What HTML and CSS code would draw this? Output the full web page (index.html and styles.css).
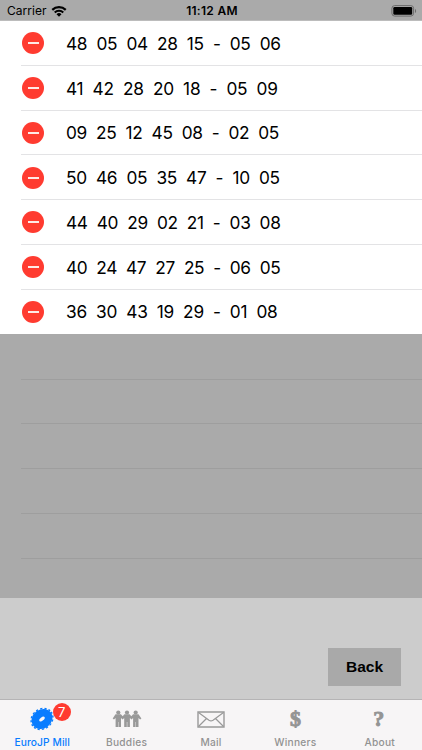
FILE: index.html
```html
<!DOCTYPE html>
<html lang="en">
<head>
<meta charset="utf-8">
<title>EuroJP Mill</title>
<link rel="stylesheet" href="styles.css">
</head>
<body>
<div class="app">
  <header class="status">
    <div class="carrier"><span>Carrier</span>
      <svg width="16" height="12" viewBox="0 0 16 12"><path d="M.5 4.1a10.8 10.8 0 0 1 15 0l-1.500 1.600a8.600 8.600 0 0 0-12 0zM3 6.700a7.200 7.200 0 0 1 10 0l-1.500 1.500a5 5 0 0 0-7 0zM5.500 9.200a3.600 3.600 0 0 1 5 0L8 11.700z"/></svg>
    </div>
    <div class="time">11:12 AM</div>
    <svg class="battery" width="26" height="12" viewBox="0 0 26 12"><rect x=".9" y=".6" width="21.7" height="10.5" rx="2.8" fill="none" stroke="#6b6b6b"/><rect x="2.3" y="2" width="18.9" height="7.7" rx="1.3"/><path d="M24 4v4c1.5-.6 1.5-3.4 0-4" fill="#6b6b6b"/></svg>
  </header>
  <main class="list">
    <div class="row"><i class="minus"></i><span>48  05  04  28  15  -  05  06</span></div>
    <div class="row"><i class="minus"></i><span>41  42  28  20  18  -  05  09</span></div>
    <div class="row"><i class="minus"></i><span>09  25  12  45  08  -  02  05</span></div>
    <div class="row"><i class="minus"></i><span>50  46  05  35  47  -  10  05</span></div>
    <div class="row"><i class="minus"></i><span>44  40  29  02  21  -  03  08</span></div>
    <div class="row"><i class="minus"></i><span>40  24  47  27  25  -  06  05</span></div>
    <div class="row last"><i class="minus"></i><span>36  30  43  19  29  -  01  08</span></div>
    <div class="empty"></div><div class="empty"></div><div class="empty"></div><div class="empty"></div><div class="empty"></div>
  </main>
  <section class="toolbar"><button class="back">Back</button></section>
  <nav class="tabs">
    <a class="tab active"><div class="icon">
      <svg width="28" height="26" viewBox="-14 -13 28 26"><g transform="rotate(-38) scale(1 .86)"><circle r="11" fill="currentColor"/><circle r="11.500" fill="none" stroke="currentColor" stroke-width="1.500" stroke-dasharray="2.300 2.216"/><ellipse rx="3.200" ry="2" fill="#f7f5f6"/></g></svg>
      <b class="badge">7</b></div><span>EuroJP Mill</span></a>
    <a class="tab"><div class="icon">
      <svg width="30" height="18" viewBox="0 0 30 18"><g fill="currentColor"><circle cx="6.3" cy="2.5" r="2.1"/><circle cx="15" cy="2.5" r="2.1"/><circle cx="23.7" cy="2.5" r="2.1"/><path d="M3.500 4.300h5.400l1.800 1.900 1.700-1.900h5.200l1.700 1.900 1.800-1.900h5.400l2.900 4.100-1.300 1.100-1.600-1.600V17h-2.500v-5h-.4v5h-2.500V8l-1.600 1.500L17.900 8V17h-2.600v-5h-.5v5h-2.600V8l-1.600 1.500L9 8V17H6.500v-5h-.4v5H3.600V7.900L2 9.500.7 8.400z"/></g></svg>
      </div><span>Buddies</span></a>
    <a class="tab"><div class="icon">
      <svg width="28" height="17" viewBox="0 0 28 17" fill="none" stroke="currentColor"><path stroke-width="1.4" d="M1 1h26v15H1z"/><path stroke-width="1.2" d="M1.500 1.500 12 9.200q2 1.300 4 0L26.500 1.500M1.500 15.500 9.500 7.500M26.500 15.500 18.500 7.500"/></svg>
      </div><span>Mail</span></a>
    <a class="tab"><div class="icon glyph dollar">$</div><span>Winners</span></a>
    <a class="tab"><div class="icon glyph question">?</div><span>About</span></a>
  </nav>
</div>
</body>
</html>
```
FILE: styles.css
```css
* { box-sizing: border-box; }
body { margin: 0; font-family: Inter, "Liberation Sans", sans-serif; color: #000; }
.app { width: 422px; height: 750px; display: flex; flex-direction: column; overflow: hidden; background: #ccc; }
.status { height: 21px; flex: none; display: grid; grid-template-columns: 1fr auto 1fr; align-items: center; padding: 1px 5px 0 7px; background: #aaa; border-bottom: 1px solid #bcbcbc; font-size: 12px; }
.carrier { display: flex; align-items: center; gap: 4px; letter-spacing: .05px; }
.time { font-weight: 600; letter-spacing: .3px; }
.battery { justify-self: end; }
.list { height: 577px; flex: none; background: #aaa; overflow: hidden; }
.row { height: 44.78px; display: flex; align-items: center; padding-left: 22px; gap: 22px; background: linear-gradient(#e3e3e5, #e3e3e5) 21px 100% / 100% 1px no-repeat #fff; font-size: 17.3px; white-space: pre; letter-spacing: -.29px; }
.row:nth-child(2) { letter-spacing: -.25px; }
.row:nth-child(3), .row:nth-child(5) { letter-spacing: -.32px; }
.row:nth-child(6) { letter-spacing: -.36px; }
.row.last { background: #fff; letter-spacing: -.27px; }
.minus { width: 22px; height: 22px; flex: none; border-radius: 50%; display: grid; place-items: center; background: #ff3b30; }
.minus::after { content: ""; width: 11px; height: 2px; background: #ffe9e7; }
.empty { height: 44.78px; margin-left: 21px; border-bottom: 1px solid #9e9e9e; }
.last + .empty { height: 45.3px; }
.toolbar { height: 101px; flex: none; display: flex; justify-content: flex-end; align-items: flex-end; padding: 0 21px 13px 0; background: #ccc; }
.back { width: 73px; height: 38px; border: 0; padding: 0; background: #a9a9a9; font: bold 15.5px "Liberation Sans", sans-serif; color: #000; }
.tabs { height: 51px; flex: none; display: grid; grid-template-columns: repeat(5, 1fr); background: #f7f5f6; border-top: 1px solid #b5b4b5; }
.tab { display: flex; flex-direction: column; align-items: center; color: #929292; font-size: 10.2px; font-weight: 500; letter-spacing: .25px; }
.tab > span { line-height: 14px; }
.icon { height: 35px; padding-top: 3px; display: flex; align-items: center; position: relative; color: #999; }
.active, .active .icon { color: #087cff; }
.active { letter-spacing: .1px; }
.badge { position: absolute; left: 24.5px; top: 3px; width: 18px; height: 18px; border-radius: 50%; background: #ff3b30; color: #fff; font-size: 13px; font-weight: 400; line-height: 18px; text-align: center; letter-spacing: 0; }
.glyph { font-family: "Liberation Serif", serif; font-weight: bold; font-size: 22px; line-height: 1; letter-spacing: 0; color: #949494; -webkit-text-stroke: .9px currentColor; }
.question { position: relative; left: -1px; }
```
